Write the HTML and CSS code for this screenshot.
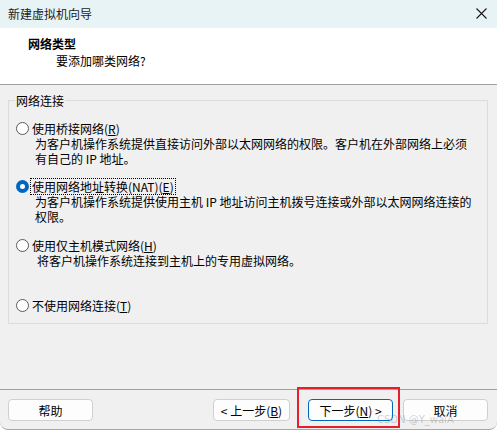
FILE: index.html
```html
<!DOCTYPE html>
<html lang="zh-CN">
<head>
    <meta charset="UTF-8">
    <meta name="viewport" content="width=device-width, initial-scale=1.0">
    <title>新建虚拟机向导</title>
    <link rel="stylesheet" href="styles.css">
</head>
<body>
    <div class="window">
        <div class="titlebar">
            <span class="title">新建虚拟机向导</span>
            <svg class="close" width="11" height="11" viewBox="0 0 11 11">
                <path d="M0.5 0.5 L10.5 10.5 M10.5 0.5 L0.5 10.5" stroke="#1a1a1a" stroke-width="1.1" fill="none"/>
            </svg>
        </div>

        <div class="header">
            <div class="header-title">网络类型</div>
            <div class="header-sub">要添加哪类网络?</div>
        </div>

        <div class="content">
            <fieldset class="group">
                <legend>网络连接</legend>

                <div class="option opt-1">
                    <div class="opt-row">
                        <span class="radio"></span>
                        <span class="opt-label">使用桥接网络(<u>R</u>)</span>
                    </div>
                    <div class="opt-desc">为客户机操作系统提供直接访问外部以太网网络的权限。客户机在外部网络上必须<br>有自己的 IP 地址。</div>
                </div>

                <div class="option opt-2">
                    <div class="opt-row">
                        <span class="radio checked"></span>
                        <span class="opt-label focused">使用网络地址转换(NAT)(<u>E</u>)</span>
                    </div>
                    <div class="opt-desc">为客户机操作系统提供使用主机 IP 地址访问主机拨号连接或外部以太网网络连接的<br>权限。</div>
                </div>

                <div class="option opt-3">
                    <div class="opt-row">
                        <span class="radio"></span>
                        <span class="opt-label">使用仅主机模式网络(<u>H</u>)</span>
                    </div>
                    <div class="opt-desc indent">将客户机操作系统连接到主机上的专用虚拟网络。</div>
                </div>

                <div class="option opt-4">
                    <div class="opt-row">
                        <span class="radio"></span>
                        <span class="opt-label">不使用网络连接(<u>T</u>)</span>
                    </div>
                </div>
            </fieldset>
        </div>

        <div class="footer">
            <button class="btn btn-help">帮助</button>
            <div class="nav">
                <button class="btn btn-back">&lt; 上一步(<u>B</u>)</button>
                <button class="btn btn-next">下一步(<u>N</u>) &gt;</button>
                <button class="btn btn-cancel">取消</button>
            </div>
        </div>

        <div class="highlight"></div>
        <div class="watermark">CSDN @Y_waiA</div>
    </div>
</body>
</html>
```

FILE: styles.css
```css
html {
    background-color: #fff;
}

body {
    margin: 0;
    font-family: "Noto Sans CJK SC", "DejaVu Sans", sans-serif;
    font-size: 12px;
    line-height: 15px;
    color: #000;
}

.window {
    position: relative;
    width: 497px;
    height: 430px;
    box-sizing: border-box;
    display: flex;
    flex-direction: column;
    background-color: #f0f0f0;
    border-bottom: 1px solid #a8a8a8;
    border-radius: 0 0 8px 8px;
    overflow: hidden;
}

.titlebar {
    height: 28px;
    flex-shrink: 0;
    display: flex;
    align-items: center;
    justify-content: space-between;
    padding: 0 10px 2px 8px;
    box-sizing: border-box;
    background-color: #e8f3f6;
}

.title {
    color: #1a1a1a;
}

.header {
    height: 57px;
    flex-shrink: 0;
    box-sizing: border-box;
    padding: 8px 0 0 28px;
    background-color: #fff;
    border-bottom: 1px solid #a0a0a0;
}

.header-title {
    font-weight: bold;
}

.header-sub {
    margin-top: 2px;
    padding-left: 28px;
}

.content {
    flex: 1;
    padding: 8px 9px 0 8px;
}

.group {
    margin: 0;
    padding: 0 6px 10px 6px;
    border: 1px solid #dcdcdc;
}

.group legend {
    padding: 0 1px;
    line-height: 15px;
}

.option {
    margin-left: 1px;
}

.opt-1 { margin-top: 13px; }
.opt-2 { margin-top: 13px; }
.opt-3 { margin-top: 14px; }
.opt-4 { margin-top: 30px; }

.opt-row {
    display: flex;
    align-items: center;
    height: 15px;
}

.radio {
    width: 13px;
    height: 13px;
    box-sizing: border-box;
    border: 1px solid #5a5a5a;
    border-radius: 50%;
    background-color: #fff;
    margin-right: 4px;
    flex-shrink: 0;
}

.radio.checked {
    border: 4px solid #0067c0;
    background-color: #fff;
}

.opt-label {
    padding: 0 1px;
    margin-left: -2px;
}

.opt-label.focused {
    outline: 1px dotted #000;
    outline-offset: 0;
}

.opt-desc {
    padding-left: 19px;
}

.opt-desc.indent {
    padding-left: 21px;
}

.footer {
    height: 40px;
    flex-shrink: 0;
    box-sizing: border-box;
    border-top: 1px solid #a0a0a0;
    padding: 9px 9px 0 8px;
    display: flex;
    justify-content: space-between;
    align-items: flex-start;
}

.nav {
    display: flex;
}

.btn {
    height: 22px;
    padding: 0;
    font-family: inherit;
    font-size: 12px;
    line-height: 15px;
    color: #000;
    background-color: #fdfdfd;
    border: 1px solid #d0d0d0;
    border-radius: 4px;
}

.btn-help {
    width: 85px;
}

.btn-back {
    width: 77px;
}

.btn-next {
    width: 85px;
    margin-left: 18px;
    border-color: #0067c0;
}

.btn-cancel {
    width: 85px;
    margin-left: 10px;
}

/* annotation drawn over the screenshot */
.highlight {
    position: absolute;
    left: 297px;
    top: 387px;
    width: 103px;
    height: 41px;
    box-sizing: border-box;
    border: 2px solid #e3202b;
}

.watermark {
    position: absolute;
    left: 377px;
    top: 412px;
    font-family: "DejaVu Sans", sans-serif;
    font-size: 10px;
    color: rgba(120, 120, 120, 0.35);
}
```
